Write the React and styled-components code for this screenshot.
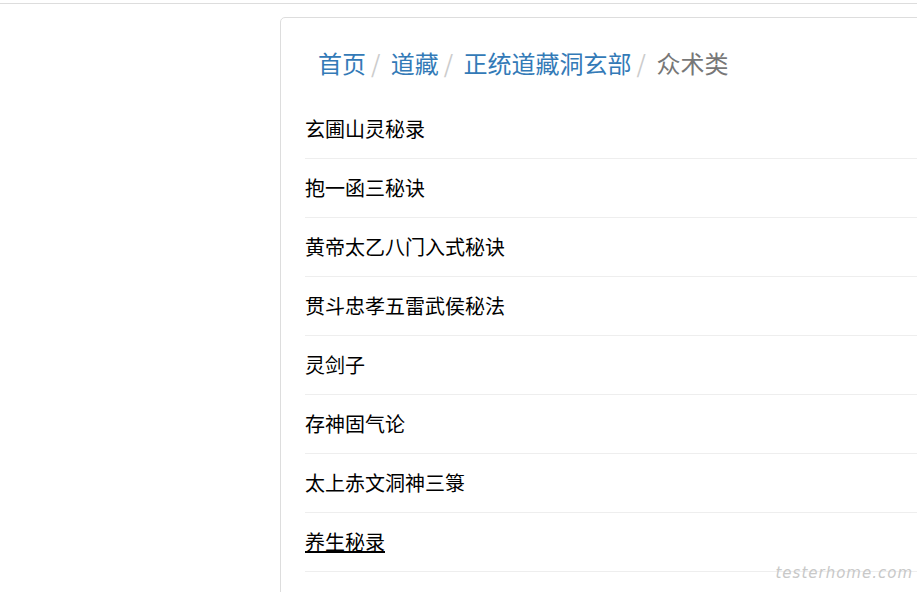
import React from 'react'
import styled, { createGlobalStyle } from 'styled-components'

const items = [
  '玄圃山灵秘录',
  '抱一函三秘诀',
  '黄帝太乙八门入式秘诀',
  '贯斗忠孝五雷武侯秘法',
  '灵剑子',
  '存神固气论',
  '太上赤文洞神三箓',
  '养生秘录',
]

const crumbs = ['首页', '道藏', '正统道藏洞玄部']

const App = () => {
  return (
    <Page>
      <GlobalStyle />
      <TopBar />
      <Layout>
        <Side />
        <Card>
          <Breadcrumb>
            {crumbs.map((c) => (
              <Crumb key={c}>
                <CrumbLink href="#">{c}</CrumbLink>
              </Crumb>
            ))}
            <Crumb $active>众术类</Crumb>
          </Breadcrumb>
          <List>
            {items.map((t, i) => (
              <Row key={t}>
                <ItemLink href="#" $hover={i === items.length - 1}>
                  {t}
                </ItemLink>
              </Row>
            ))}
          </List>
        </Card>
      </Layout>
      <Watermark>testerhome.com</Watermark>
    </Page>
  )
}

const GlobalStyle = createGlobalStyle`
    html, body {
        margin: 0;
        padding: 0;
        background: #fff;
        overflow: hidden;
    }
    body {
        font-family: "Noto Sans CJK SC", "Liberation Sans", sans-serif;
        color: #333;
    }
`

const Page = styled.div`
    position: relative;
    width: 917px;
    height: 592px;
    overflow: hidden;
`

const TopBar = styled.div`
    height: 3px;
    border-bottom: 1px solid #ddd;
`

const Layout = styled.div`
    display: flex;
    padding-top: 13px;
`

const Side = styled.div`
    flex: 0 0 280px;
`

const Card = styled.div`
    flex: 0 0 700px;
    border: 1px solid #ddd;
    border-radius: 5px;
    padding: 12px 0 0 24px;
    min-height: 640px;
`

const Breadcrumb = styled.ol`
    display: flex;
    list-style: none;
    margin: 0;
    padding: 16px 13px 20px;
    font-size: 24px;
    line-height: 34px;
`

const Crumb = styled.li`
    color: ${(p) => (p.$active ? '#777' : '#337ab7')};
    &:not(:first-child)::before {
        content: "/\\00a0";
        padding: 0 5px;
        color: #ccc;
    }
`

const CrumbLink = styled.a`
    color: #337ab7;
    text-decoration: none;
`

const List = styled.ul`
    list-style: none;
    margin: 0;
    padding: 0;
`

const Row = styled.li`
    padding: 16px 0;
    border-bottom: 1px solid #eee;
    font-size: 20px;
    line-height: 26px;
`

const ItemLink = styled.a`
    color: #000;
    text-decoration: ${(p) => (p.$hover ? 'underline' : 'none')};
    &:hover {
        text-decoration: underline;
    }
`

const Watermark = styled.div`
    position: absolute;
    right: 4px;
    bottom: 10px;
    font-family: "DejaVu Sans", sans-serif;
    font-style: italic;
    font-weight: 300;
    font-size: 15px;
    letter-spacing: 1px;
    color: #c8c8c8;
`

export default App
